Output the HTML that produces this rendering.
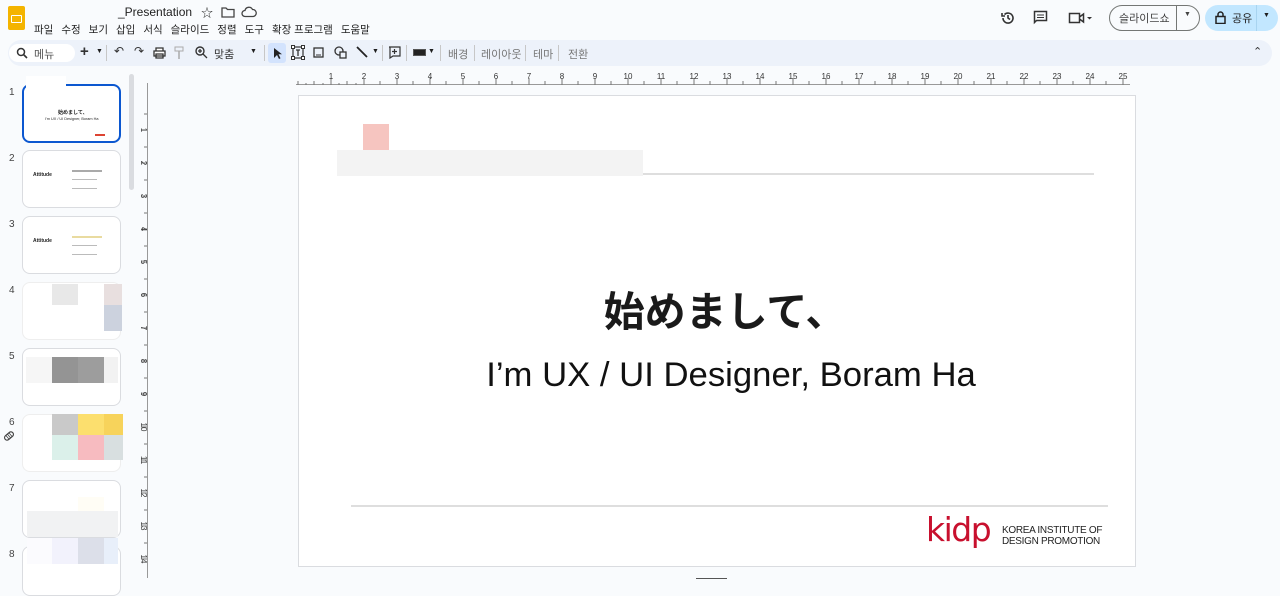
<!DOCTYPE html>
<html><head><meta charset="utf-8"><style>
*{margin:0;padding:0;box-sizing:border-box}
body{width:1280px;height:590px;overflow:hidden;background:#f9fbfd;font-family:"Liberation Sans","Noto Sans CJK KR",sans-serif;color:#1f1f1f;position:relative}
.a{position:absolute}
.menu span{margin-right:8px}
.tb{left:8px;top:40px;width:1264px;height:26px;background:#edf2fa;border-radius:13px}
.thumb{position:absolute;left:22px;width:99px;height:58px;background:#fff;border:1px solid #dadce0;border-radius:8px;overflow:hidden}
.num{position:absolute;left:9px;font-size:10px;color:#444}
.g{color:#777;font-size:11px}
</style></head><body>
<div class="a" style="left:8px;top:6px;width:17px;height:24px;background:#f4b400;border-radius:2px"></div>
<div class="a" style="left:11px;top:15px;width:11px;height:8px;border:1.5px solid #fff;border-radius:1px"></div>
<div class="a" style="left:118px;top:5px;font-size:12px;color:#1f1f1f">_Presentation</div>
<div class="a" style="left:201px;top:4px;font-size:12px">☆</div>
<svg class="a" style="left:221px;top:6px" width="14" height="12"><path d="M1 2h4l1.5 1.5H13V11H1z" fill="none" stroke="#444" stroke-width="1.3"/></svg>
<svg class="a" style="left:241px;top:6px" width="16" height="12"><path d="M4 10.5a3 3 0 0 1 0-6 4 4 0 0 1 7.5-1 3.3 3.3 0 0 1 .5 7z" fill="none" stroke="#444" stroke-width="1.3"/></svg>
<div class="a menu" style="left:34px;top:22px;font-size:10.5px;color:#222;white-space:nowrap"><span>파일</span><span>수정</span><span>보기</span><span>삽입</span><span>서식</span><span>슬라이드</span><span>정렬</span><span>도구</span><span>확장 프로그램</span><span>도움말</span></div>
<svg class="a" style="left:1000px;top:10px" width="16" height="16"><path d="M3 8a5 5 0 1 0 1.5-3.5M2 3v3h3M8 5v3l2 1.5" fill="none" stroke="#333" stroke-width="1.6"/></svg>
<svg class="a" style="left:1033px;top:10px" width="15" height="15"><path d="M1.5 1.5h12v9h-10l-2 2z" fill="none" stroke="#333" stroke-width="1.5"/><path d="M4 5h7M4 7.5h7" stroke="#333"/></svg>
<svg class="a" style="left:1068px;top:11px" width="24" height="14"><path d="M1.5 2.5h10v9h-10zM11.5 6l4-3v8l-4-3" fill="none" stroke="#333" stroke-width="1.5"/><path d="M19 6l2.5 2.5L24 6z" fill="#333"/></svg>
<div class="a" style="left:1109px;top:5px;width:91px;height:26px;border:1px solid #747775;border-radius:13px"></div>
<div class="a" style="left:1176px;top:5px;width:1px;height:26px;background:#747775"></div>
<div class="a" style="left:1119px;top:10px;font-size:11px;color:#444">슬라이드쇼</div>
<div class="a" style="left:1184px;top:11px;font-size:7px;color:#444">▼</div>
<div class="a" style="left:1205px;top:5px;width:73px;height:26px;background:#c2e7ff;border-radius:13px"></div>
<div class="a" style="left:1256px;top:5px;width:1px;height:26px;background:#a8d4f0"></div>
<svg class="a" style="left:1215px;top:11px" width="11" height="13"><rect x="1" y="5.5" width="9" height="7" fill="none" stroke="#222" stroke-width="1.5"/><path d="M3 5.5V3.5a2.5 2.5 0 0 1 5 0v2" fill="none" stroke="#222" stroke-width="1.5"/></svg>
<div class="a" style="left:1232px;top:10px;font-size:11px;color:#222">공유</div>
<div class="a" style="left:1263px;top:12px;font-size:7px">▼</div>
<div class="a tb"></div>
<div class="a" style="left:9px;top:44px;width:66px;height:18px;background:#fff;border-radius:9px"></div>
<svg class="a" style="left:16px;top:47px" width="12" height="12"><circle cx="5" cy="5" r="3.5" fill="none" stroke="#333" stroke-width="1.5"/><path d="M7.5 7.5l3.5 3.5" stroke="#333" stroke-width="1.6"/></svg>
<div class="a g" style="left:34px;top:46px;color:#555">메뉴</div>
<div class="a" style="left:80px;top:43px;font-size:15px;font-weight:bold;color:#333">+</div>
<div class="a" style="left:96px;top:48px;font-size:7px">▼</div>
<div class="a" style="left:106px;top:45px;width:1px;height:16px;background:#c7c7c7"></div>
<div class="a" style="left:114px;top:44px;font-size:12px;color:#333">↶</div>
<div class="a" style="left:134px;top:44px;font-size:12px;color:#333">↷</div>
<svg class="a" style="left:153px;top:47px" width="13" height="12"><path d="M3 4V1h7v3M1 4h11v5H1zM3 7h7v4H3z" fill="#fff" stroke="#333" stroke-width="1.3"/></svg>
<svg class="a" style="left:174px;top:46px" width="10" height="14"><rect x="1" y="1" width="8" height="4" fill="none" stroke="#aaa"/><path d="M5 5v3M5 8v5" stroke="#aaa" stroke-width="1.5"/></svg>
<svg class="a" style="left:195px;top:46px" width="13" height="13"><circle cx="5" cy="5" r="4" fill="none" stroke="#333" stroke-width="1.4"/><path d="M8 8l4 4M3 5h4M5 3v4" stroke="#333" stroke-width="1.3"/></svg>
<div class="a g" style="left:214px;top:46px;color:#333">맞춤</div>
<div class="a" style="left:250px;top:48px;font-size:7px">▼</div>
<div class="a" style="left:264px;top:45px;width:1px;height:16px;background:#c7c7c7"></div>
<div class="a" style="left:268px;top:43px;width:18px;height:20px;background:#d3e3fd;border-radius:3px"></div>
<svg class="a" style="left:272px;top:47px" width="10" height="13"><path d="M2 1v10l3-3 2 4 1.5-.7-2-4H10z" fill="#222"/></svg>
<svg class="a" style="left:291px;top:45px" width="14" height="15"><rect x="2" y="2" width="10" height="11" fill="none" stroke="#333" stroke-width="1.2"/><path d="M5 5h4M7 5v6" stroke="#333" stroke-width="1.3"/><rect x="0.5" y="0.5" width="3" height="3" fill="#fff" stroke="#333"/><rect x="10.5" y="0.5" width="3" height="3" fill="#fff" stroke="#333"/><rect x="0.5" y="11.5" width="3" height="3" fill="#fff" stroke="#333"/><rect x="10.5" y="11.5" width="3" height="3" fill="#fff" stroke="#333"/></svg>
<svg class="a" style="left:313px;top:47px" width="11" height="11"><rect x="1" y="1" width="9" height="9" fill="none" stroke="#333" stroke-width="1.3"/><path d="M3 8h5" stroke="#333"/></svg>
<svg class="a" style="left:334px;top:46px" width="14" height="13"><circle cx="5" cy="5" r="4" fill="none" stroke="#333" stroke-width="1.3"/><rect x="6" y="6" width="6" height="6" fill="#edf2fa" stroke="#333" stroke-width="1.3"/></svg>
<svg class="a" style="left:356px;top:46px" width="12" height="12"><path d="M1 1l10 10" stroke="#222" stroke-width="1.8"/></svg>
<div class="a" style="left:372px;top:48px;font-size:7px">▼</div>
<div class="a" style="left:382px;top:45px;width:1px;height:16px;background:#c7c7c7"></div>
<svg class="a" style="left:388px;top:46px" width="13" height="13"><path d="M1 1h11v9H5l-3 2V1z" fill="none" stroke="#333" stroke-width="1.2"/><path d="M4 5.5h5M6.5 3v5" stroke="#333" stroke-width="1.2"/></svg>
<div class="a" style="left:406px;top:45px;width:1px;height:16px;background:#c7c7c7"></div>
<div class="a" style="left:413px;top:49px;width:13px;height:7px;background:#222;border:1px solid #555"></div>
<div class="a" style="left:428px;top:48px;font-size:7px">▼</div>
<div class="a" style="left:440px;top:45px;width:1px;height:16px;background:#c7c7c7"></div>
<div class="a g" style="left:448px;top:46px">배경</div>
<div class="a" style="left:474px;top:45px;width:1px;height:16px;background:#c7c7c7"></div>
<div class="a g" style="left:481px;top:46px">레이아웃</div>
<div class="a" style="left:525px;top:45px;width:1px;height:16px;background:#c7c7c7"></div>
<div class="a g" style="left:533px;top:46px">테마</div>
<div class="a" style="left:558px;top:45px;width:1px;height:16px;background:#c7c7c7"></div>
<div class="a g" style="left:568px;top:46px">전환</div>
<div class="a" style="left:1253px;top:45px;font-size:11px;color:#333">⌃</div>
<div class="a" style="left:129px;top:74px;width:5px;height:116px;background:#dadce0;border-radius:3px"></div>
<div class="num" style="top:87px">1</div>
<div class="thumb" style="top:84px;border:2px solid #0b57d0;height:59px"></div>
<div class="a" style="left:26px;top:76px;width:40px;height:14px;background:#fff"></div>
<div class="a" style="left:58px;top:109px;font-size:5px;font-weight:bold;font-family:'Noto Sans CJK JP',sans-serif">始めまして、</div>
<div class="a" style="left:45px;top:117px;font-size:3.8px">I'm UX / UI Designer, Boram Ha</div>
<div class="a" style="left:95px;top:134px;width:10px;height:2px;background:#d43"></div>
<div class="num" style="top:153px">2</div>
<div class="thumb" style="top:150px"></div>
<div class="a" style="left:33px;top:172px;font-size:5px;font-weight:bold">Attitude</div>
<div class="a" style="left:72px;top:170px;width:30px;height:1.5px;background:#aaa"></div>
<div class="a" style="left:72px;top:179px;width:25px;height:1px;background:#bbb"></div>
<div class="a" style="left:72px;top:188px;width:25px;height:1px;background:#bbb"></div>
<div class="num" style="top:219px">3</div>
<div class="thumb" style="top:216px"></div>
<div class="a" style="left:33px;top:238px;font-size:5px;font-weight:bold">Attitude</div>
<div class="a" style="left:72px;top:236px;width:30px;height:2px;background:#e9dba0"></div>
<div class="a" style="left:72px;top:245px;width:25px;height:1px;background:#bbb"></div>
<div class="a" style="left:72px;top:254px;width:25px;height:1px;background:#bbb"></div>
<div class="num" style="top:285px">4</div>
<div class="thumb" style="top:282px;border-color:#eee"></div>
<div class="a" style="left:52px;top:284px;width:26px;height:21px;background:#e8e8e8"></div>
<div class="a" style="left:104px;top:284px;width:18px;height:21px;background:#e8dfdf"></div>
<div class="a" style="left:104px;top:305px;width:18px;height:26px;background:#ccd2de"></div>
<div class="num" style="top:351px">5</div>
<div class="thumb" style="top:348px"></div>
<div class="a" style="left:26px;top:357px;width:26px;height:26px;background:#f6f6f6"></div>
<div class="a" style="left:52px;top:357px;width:26px;height:26px;background:#949494"></div>
<div class="a" style="left:78px;top:357px;width:26px;height:26px;background:#9d9d9d"></div>
<div class="a" style="left:104px;top:357px;width:14px;height:26px;background:#f2f2f2"></div>
<div class="num" style="top:417px">6</div>
<div class="thumb" style="top:414px;border-color:#eee"></div>
<div class="a" style="left:52px;top:414px;width:26px;height:21px;background:#c9c9c9"></div>
<div class="a" style="left:78px;top:414px;width:26px;height:21px;background:#fcdf6e"></div>
<div class="a" style="left:104px;top:414px;width:19px;height:21px;background:#f7d35b"></div>
<div class="a" style="left:52px;top:435px;width:26px;height:25px;background:#dbf0ea"></div>
<div class="a" style="left:78px;top:435px;width:26px;height:25px;background:#f7bbc0"></div>
<div class="a" style="left:104px;top:435px;width:19px;height:25px;background:#d8dfe0"></div>
<svg class="a" style="left:3px;top:430px" width="12" height="12"><g transform="rotate(-40 6 6)"><rect x="1" y="3.5" width="10" height="5" rx="2.5" fill="none" stroke="#444" stroke-width="1.2"/><path d="M4 3.5v5M6 3.5v5M8 3.5v5" stroke="#444" stroke-width=".8"/></g></svg>
<div class="num" style="top:483px">7</div>
<div class="thumb" style="top:480px"></div>
<div class="a" style="left:78px;top:497px;width:26px;height:14px;background:#fffdf5"></div>
<div class="a" style="left:27px;top:511px;width:91px;height:26px;background:#f1f2f3"></div>
<div class="num" style="top:549px">8</div>
<div class="thumb" style="top:546px;height:50px"></div>
<div class="a" style="left:27px;top:538px;width:25px;height:26px;background:#fbfbfe"></div>
<div class="a" style="left:52px;top:538px;width:26px;height:26px;background:#f2f2fc"></div>
<div class="a" style="left:78px;top:538px;width:26px;height:26px;background:#dcdfe9"></div>
<div class="a" style="left:104px;top:538px;width:14px;height:26px;background:#e8effa"></div>
<svg class="a" style="left:296px;top:70px" width="840" height="16">
<line x1="0" y1="14.5" x2="834" y2="14.5" stroke="#999"/>
<path stroke="#777" d="M2 11v4M10 13v2M18 11v4M27 13v2M35 8v7M43 13v2M51 11v4M60 13v2"/>
<g font-size="8" fill="#333" font-family="Liberation Sans" text-anchor="middle">
<text x="35" y="9">1</text><text x="68" y="9">2</text><text x="101" y="9">3</text><text x="134" y="9">4</text><text x="167" y="9">5</text><text x="200" y="9">6</text><text x="233" y="9">7</text><text x="266" y="9">8</text><text x="299" y="9">9</text><text x="332" y="9">10</text><text x="365" y="9">11</text><text x="398" y="9">12</text><text x="431" y="9">13</text><text x="464" y="9">14</text><text x="497" y="9">15</text><text x="530" y="9">16</text><text x="563" y="9">17</text><text x="596" y="9">18</text><text x="629" y="9">19</text><text x="662" y="9">20</text><text x="695" y="9">21</text><text x="728" y="9">22</text><text x="761" y="9">23</text><text x="794" y="9">24</text><text x="827" y="9">25</text>
</g>
<path stroke="#777" d="M68 8v7M101 8v7M134 8v7M167 8v7M200 8v7M233 8v7M266 8v7M299 8v7M332 8v7M365 8v7M398 8v7M431 8v7M464 8v7M497 8v7M530 8v7M563 8v7M596 8v7M629 8v7M662 8v7M695 8v7M728 8v7M761 8v7M794 8v7M827 8v7M51 11v4M84 11v4M117 11v4M150 11v4M183 11v4M216 11v4M249 11v4M282 11v4M315 11v4M348 11v4M381 11v4M414 11v4M447 11v4M480 11v4M513 11v4M546 11v4M579 11v4M612 11v4M645 11v4M678 11v4M711 11v4M744 11v4M777 11v4M810 11v4"/>
</svg>
<svg class="a" style="left:136px;top:83px" width="14" height="495">
<line x1="11.5" y1="0" x2="11.5" y2="495" stroke="#999"/>
<path stroke="#777" d="M5 47h6M5 80h6M5 113h6M5 146h6M5 179h6M5 212h6M5 245h6M5 278h6M5 311h6M5 344h6M5 377h6M5 410h6M5 443h6M5 476h6M8 31h3M8 64h3M8 97h3M8 130h3M8 163h3M8 196h3M8 229h3M8 262h3M8 295h3M8 328h3M8 361h3M8 394h3M8 427h3M8 460h3"/>
<g font-size="8" fill="#333" font-family="Liberation Sans" text-anchor="middle">
<text transform="translate(5,47) rotate(90)">1</text><text transform="translate(5,80) rotate(90)">2</text><text transform="translate(5,113) rotate(90)">3</text><text transform="translate(5,146) rotate(90)">4</text><text transform="translate(5,179) rotate(90)">5</text><text transform="translate(5,212) rotate(90)">6</text><text transform="translate(5,245) rotate(90)">7</text><text transform="translate(5,278) rotate(90)">8</text><text transform="translate(5,311) rotate(90)">9</text><text transform="translate(5,344) rotate(90)">10</text><text transform="translate(5,377) rotate(90)">11</text><text transform="translate(5,410) rotate(90)">12</text><text transform="translate(5,443) rotate(90)">13</text><text transform="translate(5,476) rotate(90)">14</text>
</g></svg>
<div class="a" style="left:298px;top:95px;width:838px;height:472px;background:#fff;border:1px solid #dadce0"></div>
<div class="a" style="left:363px;top:124px;width:26px;height:26px;background:#f6c5c0"></div>
<div class="a" style="left:337px;top:150px;width:306px;height:26px;background:#f3f3f3"></div>
<div class="a" style="left:643px;top:173px;width:451px;height:2px;background:#dedede"></div>
<div class="a" style="left:306px;top:278px;width:838px;text-align:center;font-size:41px;font-weight:bold;color:#1a1a1a;font-family:'Liberation Sans','Noto Sans CJK JP',sans-serif">始めまして、</div>
<div class="a" style="left:312px;top:356px;width:838px;text-align:center;font-size:34.7px;color:#111">I’m UX / UI Designer, Boram Ha</div>
<div class="a" style="left:351px;top:505px;width:757px;height:2px;background:#dedede"></div>
<div class="a" style="left:926px;top:510px;font-size:33px;color:#c8102e;letter-spacing:-1.5px;font-family:'DejaVu Sans',sans-serif;line-height:40px">kidp</div>
<div class="a" style="left:1002px;top:525px;font-size:10px;line-height:11px;color:#222;letter-spacing:-0.3px">KOREA INSTITUTE OF<br>DESIGN PROMOTION</div>
<div class="a" style="left:696px;top:578px;width:31px;height:1px;background:#555"></div>
</body></html>
